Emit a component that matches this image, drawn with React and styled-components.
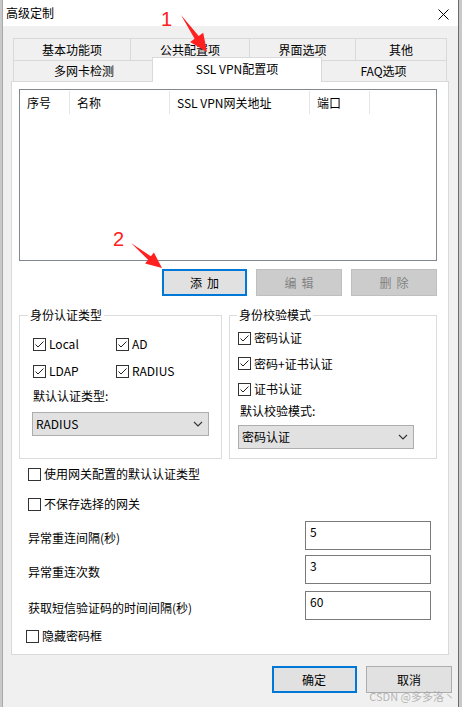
import React from 'react'
import styled, { createGlobalStyle } from 'styled-components'

const GlobalStyle = createGlobalStyle`
  html, body {
    margin: 0;
    padding: 0;
  }
  body {
    background: #c9c9c9;
    font-family: "Noto Sans CJK SC", "Noto Sans", sans-serif;
    font-size: 12px;
    color: #000;
  }
`

const Stage = styled.div`
  position: relative;
  width: 462px;
  height: 707px;
  overflow: hidden;
`

const Window = styled.div`
  position: relative;
  box-sizing: border-box;
  width: 457px;
  height: 707px;
  margin-left: 2px;
  background: #f0f0f0;
  border-left: 1px solid #a9a9a9;
  border-right: 1px solid #6b6b6b;
  display: flex;
  flex-direction: column;
`

const TitleBar = styled.div`
  height: 26px;
  flex: none;
  background: #fff;
  display: flex;
  align-items: center;
  justify-content: space-between;
  padding: 0 9px 0 3px;
  line-height: 16px;
`

const CloseIcon = styled.svg`
  width: 11px;
  height: 11px;
  margin-top: 2px;
`

const Body = styled.div`
  padding: 12px 9px 0 8px;
`

const TabStrip = styled.div`
  margin: 0 2px;
`

const TabRow = styled.div`
  display: flex;
  align-items: flex-end;
  height: ${p => p.$h}px;
`

const Tab = styled.div`
  box-sizing: border-box;
  width: ${p => p.$w}px;
  height: ${p => p.$h}px;
  border: 1px solid #d9d9d9;
  border-bottom: none;
  border-right: ${p => (p.$last ? '1px solid #d9d9d9' : 'none')};
  background: #f0f0f0;
  display: flex;
  align-items: center;
  justify-content: center;
  line-height: 16px;
`

const ActiveTab = styled(Tab)`
  position: relative;
  z-index: 1;
  height: 25px;
  margin: 0 -2px -1px;
  border-right: 1px solid #d9d9d9;
  background: #fff;
  padding-bottom: 2px;
`

const Panel = styled.div`
  box-sizing: border-box;
  height: 574px;
  background: #fff;
  border: 1px solid #d9d9d9;
  padding: 7px 11px 0 7px;
`

const ListBox = styled.div`
  box-sizing: border-box;
  height: 172px;
  border: 1px solid #828790;
`

const ListHeader = styled.div`
  display: flex;
  margin-top: 1px;
  height: 23px;
`

const HeaderCell = styled.div`
  box-sizing: border-box;
  width: ${p => p.$w}px;
  border-right: 1px solid #e5e5e5;
  padding-left: 7px;
  line-height: 23px;
  white-space: nowrap;
`

const ButtonRow = styled.div`
  display: flex;
  justify-content: flex-end;
  gap: ${p => p.$gap}px;
  margin-top: ${p => p.$mt}px;
`

const Button = styled.button`
  box-sizing: border-box;
  width: ${p => p.$w}px;
  height: 27px;
  margin: 0;
  padding: 0;
  font-family: inherit;
  font-size: 12px;
  line-height: 16px;
  letter-spacing: ${p => (p.$spaced ? '5px' : '0')};
  text-indent: ${p => (p.$spaced ? '5px' : '0')};
  color: ${p => (p.$variant === 'disabled' ? '#838383' : '#000')};
  background: ${p => (p.$variant === 'disabled' ? '#cccccc' : '#e1e1e1')};
  border: ${p =>
    p.$variant === 'primary'
      ? '2px solid #0078d7'
      : p.$variant === 'disabled'
      ? '1px solid #bfbfbf'
      : '1px solid #adadad'};
`

const GroupRow = styled.div`
  display: flex;
  gap: 7px;
  margin-top: 11px;
`

const GroupBox = styled.fieldset`
  box-sizing: border-box;
  width: ${p => p.$w}px;
  height: 152px;
  margin: 0;
  min-width: 0;
  border: 1px solid #dcdcdc;
  padding: ${p => p.$pad};
`

const Legend = styled.legend`
  padding: 0 2px;
  margin-left: ${p => p.$ml}px;
  line-height: 16px;
`

const CheckGrid = styled.div`
  display: grid;
  grid-template-columns: 83px 83px;
  row-gap: 9px;
  margin-left: 1px;
`

const CheckStack = styled.div`
  display: flex;
  flex-direction: column;
  gap: 7.5px;
`

const CheckRow = styled.label`
  display: flex;
  align-items: center;
  gap: 3px;
  height: 18px;
  line-height: 16px;
  margin-top: ${p => p.$mt || 0}px;
  margin-left: ${p => p.$ml || 0}px;
  white-space: nowrap;
`

const Box = styled.span`
  box-sizing: border-box;
  width: 13px;
  height: 13px;
  flex: none;
  border: 1px solid #333;
  background: #fff;
  display: flex;
  align-items: center;
  justify-content: center;
`

const FieldLabel = styled.div`
  line-height: 16px;
  margin-top: ${p => p.$mt}px;
  margin-left: ${p => p.$ml || 0}px;
`

const Select = styled.div`
  box-sizing: border-box;
  width: ${p => p.$w}px;
  height: 24px;
  margin-top: ${p => p.$mt}px;
  background: #e1e1e1;
  border: 1px solid #adadad;
  display: flex;
  align-items: center;
  justify-content: space-between;
  padding: 0 5px 0 3px;
  line-height: 16px;
`

const Lower = styled.div`
  margin: 0 6px 0 9px;
`

const InputRow = styled.div`
  display: flex;
  align-items: center;
  margin-top: ${p => p.$mt}px;
`

const InputLabel = styled.span`
  padding-top: 5px;
  line-height: 16px;
`

const TextBox = styled.div`
  box-sizing: border-box;
  width: 126px;
  height: 29px;
  margin-left: auto;
  border: 1px solid #7a7a7a;
  padding: 2px 4px;
  line-height: 16px;
  background: #fff;
`

const Footer = styled.div`
  display: flex;
  justify-content: flex-end;
  gap: 9.5px;
  margin: 11px -3px 0 0;
`

const Watermark = styled.div`
  position: absolute;
  right: 3px;
  bottom: 4px;
  font-size: 11px;
  line-height: 13px;
  color: rgba(160, 160, 160, 0.75);
  font-family: "Noto Sans CJK SC", "Noto Sans", sans-serif;
`

const Overlay = styled.svg`
  position: absolute;
  left: 0;
  top: 0;
  pointer-events: none;
`

const Check = () => (
  <svg width="11" height="11" viewBox="0 0 11 11">
    <polyline points="1.5,5.5 4,8 9.5,2.5" fill="none" stroke="#222" strokeWidth="1" />
  </svg>
)

const CheckItem = ({ checked, children, ...rest }) => (
  <CheckRow {...rest}>
    <Box>{checked && <Check />}</Box>
    <span>{children}</span>
  </CheckRow>
)

const Chevron = () => (
  <svg width="10" height="6" viewBox="0 0 10 6">
    <polyline points="1,1 5,5 9,1" fill="none" stroke="#333" strokeWidth="1.1" />
  </svg>
)

const tabsTop = [
  { label: '基本功能项', w: 117 },
  { label: '公共配置项', w: 119 },
  { label: '界面选项', w: 106 },
  { label: '其他', w: 92 },
]

const columns = [
  { label: '序号', w: 50 },
  { label: '名称', w: 100 },
  { label: 'SSL VPN网关地址', w: 140 },
  { label: '端口', w: 60 },
]

export default function App() {
  return (
    <Stage>
      <GlobalStyle />
      <Window>
        <TitleBar>
          <span>高级定制</span>
          <CloseIcon viewBox="0 0 11 11">
            <path d="M0.5 0.5 L10.5 10.5 M10.5 0.5 L0.5 10.5" stroke="#000" strokeWidth="1" />
          </CloseIcon>
        </TitleBar>

        <Body>
          <TabStrip>
            <TabRow $h={22}>
              {tabsTop.map((t, i) => (
                <Tab key={t.label} $w={t.w} $h={22} $last={i === tabsTop.length - 1}>
                  {t.label}
                </Tab>
              ))}
            </TabRow>
            <TabRow $h={21}>
              <Tab $w={141} $h={21}>多网卡检测</Tab>
              <ActiveTab $w={170} $h={25}>SSL VPN配置项</ActiveTab>
              <Tab $w={127} $h={21} $last>FAQ选项</Tab>
            </TabRow>
          </TabStrip>

          <Panel>
            <ListBox>
              <ListHeader>
                {columns.map(c => (
                  <HeaderCell key={c.label} $w={c.w}>{c.label}</HeaderCell>
                ))}
              </ListHeader>
            </ListBox>

            <ButtonRow $gap={9} $mt={8}>
              <Button $w={85} $variant="primary" $spaced>添加</Button>
              <Button $w={86} $variant="disabled" $spaced>编辑</Button>
              <Button $w={86} $variant="disabled" $spaced>删除</Button>
            </ButtonRow>

            <GroupRow>
              <GroupBox $w={203} $pad="12px 0 0 12px">
                <Legend $ml={-4}>身份认证类型</Legend>
                <CheckGrid>
                  <CheckItem checked>Local</CheckItem>
                  <CheckItem checked>AD</CheckItem>
                  <CheckItem checked>LDAP</CheckItem>
                  <CheckItem checked>RADIUS</CheckItem>
                </CheckGrid>
                <FieldLabel $mt={8} $ml={1}>默认认证类型:</FieldLabel>
                <Select $w={177} $mt={8}>
                  <span>RADIUS</span>
                  <Chevron />
                </Select>
              </GroupBox>

              <GroupBox $w={208} $pad="6px 0 0 8px">
                <Legend $ml={-1}>身份校验模式</Legend>
                <CheckStack>
                  <CheckItem checked>密码认证</CheckItem>
                  <CheckItem checked>密码+证书认证</CheckItem>
                  <CheckItem checked>证书认证</CheckItem>
                </CheckStack>
                <FieldLabel $mt={5} $ml={2}>默认校验模式:</FieldLabel>
                <Select $w={176} $mt={6}>
                  <span>密码认证</span>
                  <Chevron />
                </Select>
              </GroupBox>
            </GroupRow>

            <Lower>
              <CheckItem $mt={6}>使用网关配置的默认认证类型</CheckItem>
              <CheckItem $mt={12}>不保存选择的网关</CheckItem>
              <InputRow $mt={8}>
                <InputLabel>异常重连间隔(秒)</InputLabel>
                <TextBox>5</TextBox>
              </InputRow>
              <InputRow $mt={5}>
                <InputLabel>异常重连次数</InputLabel>
                <TextBox>3</TextBox>
              </InputRow>
              <InputRow $mt={7}>
                <InputLabel>获取短信验证码的时间间隔(秒)</InputLabel>
                <TextBox>60</TextBox>
              </InputRow>
              <CheckItem $mt={7} $ml={-2}>隐藏密码框</CheckItem>
            </Lower>
          </Panel>

          <Footer>
            <Button $w={85} $variant="primary">确定</Button>
            <Button $w={86}>取消</Button>
          </Footer>
        </Body>

        <Watermark>CSDN @多多洛丶</Watermark>
      </Window>

      <Overlay width="462" height="707" viewBox="0 0 462 707">
        <text x="161" y="26" fill="#ff2020" fontSize="20" fontFamily="Liberation Sans, sans-serif">1</text>
        <polygon
          points="181,15 194.6,38.7 190.1,41.9 207,52 203.2,32.7 198.7,35.9"
          fill="#ff2020"
        />
        <text x="113" y="246" fill="#ff2020" fontSize="20" fontFamily="Liberation Sans, sans-serif">2</text>
        <polygon
          points="131,243 148.1,259.7 145.1,263.5 162,268 153.9,252.5 150.9,256.3"
          fill="#ff2020"
        />
      </Overlay>
    </Stage>
  )
}
